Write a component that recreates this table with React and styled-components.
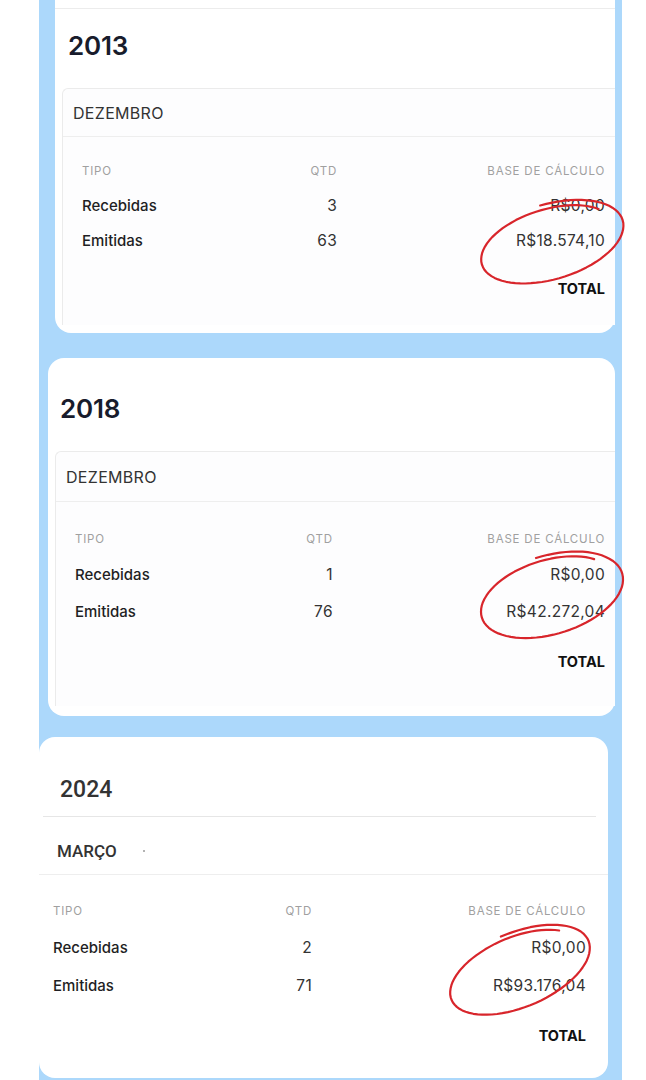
import React from 'react';
import styled, { createGlobalStyle } from 'styled-components';

const GlobalStyle = createGlobalStyle`
  html, body {
    margin: 0;
    padding: 0;
    background: #ffffff;
  }
  body {
    font-family: Inter, "Noto Sans", sans-serif;
    color: #222;
  }
`;

const Page = styled.div`
  width: 646px;
  height: 1080px;
  overflow: hidden;
  background: #ffffff;
`;

const Column = styled.div`
  margin-left: 39px;
  width: 583px;
  height: 1080px;
  background: #acd8fb;
  display: flex;
  flex-direction: column;
`;

const Card = styled.section`
  position: relative;
  box-sizing: border-box;
  display: flex;
  flex-direction: column;
  flex-shrink: 0;
  background: #ffffff;
  height: ${(p) => p.$h}px;
  margin: ${(p) => p.$mt}px ${(p) => p.$mr}px 0 ${(p) => p.$ml}px;
  border-radius: ${(p) => (p.$flatTop ? '0 0 16px 16px' : '16px')};
`;

const TopStrip = styled.div`
  height: 8px;
  border-bottom: 1px solid #ececec;
`;

const Year = styled.h2`
  box-sizing: border-box;
  margin: 0;
  display: flex;
  align-items: center;
  height: ${(p) => p.$h}px;
  padding: ${(p) => p.$pt}px 0 0 ${(p) => p.$pl}px;
  font-size: 26px;
  font-weight: 600;
  color: #181c2c;
  letter-spacing: -0.2px;
`;

const MonthBox = styled.div`
  flex: 1;
  display: flex;
  flex-direction: column;
  margin: ${(p) => p.$mt}px 0 ${(p) => p.$mb}px 7px;
  border: 1px solid #ebebeb;
  border-right: none;
  border-bottom: none;
  border-top-left-radius: 6px;
  background: #fdfdfe;
`;

const MonthHead = styled.div`
  box-sizing: border-box;
  display: flex;
  align-items: center;
  height: ${(p) => p.$h}px;
  padding-left: 10px;
  border-bottom: 1px solid #eeeeee;
  font-size: 16px;
  color: #333;
  letter-spacing: 0.3px;
`;

const Table = styled.div`
  display: flex;
  flex-direction: column;
  padding: ${(p) => p.$pt}px ${(p) => p.$pr}px 0 ${(p) => p.$pl}px;
`;

const Row = styled.div`
  display: grid;
  grid-template-columns: 1fr 80px 1.53fr;
  align-items: center;
  height: ${(p) => p.$h}px;
`;

const HeadCell = styled.span`
  font-size: 11.5px;
  letter-spacing: 0.8px;
  text-transform: uppercase;
  color: #a0a0a0;
  text-align: ${(p) => (p.$right ? 'right' : 'left')};
`;

const Label = styled.span`
  font-size: 15px;
  font-weight: 500;
  color: #1f1f24;
`;

const Value = styled.span`
  font-size: 15.5px;
  letter-spacing: 0.3px;
  color: #333;
  text-align: right;
`;

const Total = styled.div`
  padding-top: ${(p) => p.$pt}px;
  line-height: 18px;
  text-align: right;
  font-size: 14.5px;
  font-weight: 700;
  color: #111;
`;

/* card 3 is a different screenshot: flatter header, condensed title font */
const PlainYear = styled.h2`
  box-sizing: border-box;
  margin: 0 12px 0 4px;
  height: 80px;
  padding: 26px 0 0 17px;
  display: flex;
  align-items: center;
  border-bottom: 1px solid #e6e6e6;
  font-family: Roboto, "Noto Sans", sans-serif;
  font-size: 23px;
  font-weight: 500;
  color: #333;
`;

const PlainMonth = styled.div`
  box-sizing: border-box;
  height: 58px;
  padding: 11px 0 0 18px;
  display: flex;
  align-items: center;
  gap: 26px;
  border-bottom: 1px solid #eeeeee;
  font-family: Roboto, "Noto Sans", sans-serif;
  font-size: 17px;
  font-weight: 500;
  color: #333;
`;

const Dot = styled.span`
  width: 2px;
  height: 2px;
  border-radius: 50%;
  background: #9a9a9a;
`;

const Scribble = styled.svg`
  position: absolute;
  left: 0;
  top: 0;
  width: 100%;
  height: 100%;
  overflow: visible;
  pointer-events: none;
`;

function loopPath({ cx, cy, rx, ry, rot, start, sweep, grow }) {
  const n = 90;
  const r = (rot * Math.PI) / 180;
  const pts = [];
  for (let i = 0; i <= n; i++) {
    const t = start + (sweep * i) / n;
    const k = 1 + grow * (0.5 - i / n);
    const x0 = Math.cos(t) * rx * k;
    const y0 = Math.sin(t) * ry * k;
    const x = cx + x0 * Math.cos(r) - y0 * Math.sin(r);
    const y = cy + x0 * Math.sin(r) + y0 * Math.cos(r);
    pts.push(`${x.toFixed(1)},${y.toFixed(1)}`);
  }
  return 'M' + pts.join(' L');
}

const RedLoop = ({ loop }) => (
  <Scribble>
    <path
      d={loopPath(loop)}
      fill="none"
      stroke="#d8252b"
      strokeWidth="2.2"
      strokeLinecap="round"
      strokeLinejoin="round"
    />
  </Scribble>
);

const Rows = ({ rows, heights }) => (
  <>
    <Row $h={heights[0]}>
      <HeadCell>Tipo</HeadCell>
      <HeadCell $right>Qtd</HeadCell>
      <HeadCell $right>Base de cálculo</HeadCell>
    </Row>
    {rows.map((r, i) => (
      <Row key={r.tipo} $h={heights[i + 1]}>
        <Label>{r.tipo}</Label>
        <Value>{r.qtd}</Value>
        <Value>{r.base}</Value>
      </Row>
    ))}
  </>
);

const YearCard = ({ data }) => (
  <Card $h={data.h} $mt={data.mt} $ml={data.ml} $mr={data.mr} $flatTop={data.flatTop}>
    {data.flatTop && <TopStrip />}
    <Year $h={data.yearH} $pt={data.yearPt} $pl={data.yearPl}>
      {data.year}
    </Year>
    <MonthBox $mt={data.boxMt} $mb={data.boxMb}>
      <MonthHead $h={data.monthH}>{data.month}</MonthHead>
      <Table $pt={data.tablePt} $pl={19} $pr={10}>
        <Rows rows={data.rows} heights={data.rowH} />
        <Total $pt={data.totalPt}>TOTAL</Total>
      </Table>
    </MonthBox>
    <RedLoop loop={data.loop} />
  </Card>
);

const cards = [
  {
    year: '2013',
    month: 'DEZEMBRO',
    flatTop: true,
    h: 333,
    mt: 0,
    ml: 16,
    mr: 7,
    yearH: 72,
    yearPt: 0,
    yearPl: 13,
    boxMt: 7,
    boxMb: 8,
    monthH: 48,
    tablePt: 17,
    rowH: [34, 34, 36],
    totalPt: 22,
    rows: [
      { tipo: 'Recebidas', qtd: '3', base: 'R$0,00' },
      { tipo: 'Emitidas', qtd: '63', base: 'R$18.574,10' },
    ],
    loop: { cx: 495, cy: 243, rx: 73, ry: 36, rot: -17, start: -1.55, sweep: 7.25, grow: 0.15 },
  },
  {
    year: '2018',
    month: 'DEZEMBRO',
    flatTop: false,
    h: 358,
    mt: 25,
    ml: 9,
    mr: 7,
    yearH: 93,
    yearPt: 7,
    yearPl: 12,
    boxMt: 0,
    boxMb: 10,
    monthH: 50,
    tablePt: 20,
    rowH: [34, 36, 38],
    totalPt: 23,
    rows: [
      { tipo: 'Recebidas', qtd: '1', base: 'R$0,00' },
      { tipo: 'Emitidas', qtd: '76', base: 'R$42.272,04' },
    ],
    loop: { cx: 502, cy: 238, rx: 73, ry: 38, rot: -17, start: -1.6, sweep: 7.2, grow: 0.13 },
  },
];

const last = {
  rows: [
    { tipo: 'Recebidas', qtd: '2', base: 'R$0,00' },
    { tipo: 'Emitidas', qtd: '71', base: 'R$93.176,04' },
  ],
  loop: { cx: 479, cy: 234, rx: 74, ry: 36, rot: -23, start: -1.6, sweep: 7.2, grow: 0.13 },
};

export default function App() {
  return (
    <Page>
      <GlobalStyle />
      <Column>
        {cards.map((c) => (
          <YearCard key={c.year} data={c} />
        ))}
        <Card $h={341} $mt={21} $ml={0} $mr={14}>
          <PlainYear>2024</PlainYear>
          <PlainMonth>
            MARÇO
            <Dot />
          </PlainMonth>
          <Table $pt={19} $pl={14} $pr={22}>
            <Rows rows={last.rows} heights={[34, 38, 38]} />
            <Total $pt={23}>TOTAL</Total>
          </Table>
          <RedLoop loop={last.loop} />
        </Card>
      </Column>
    </Page>
  );
}
